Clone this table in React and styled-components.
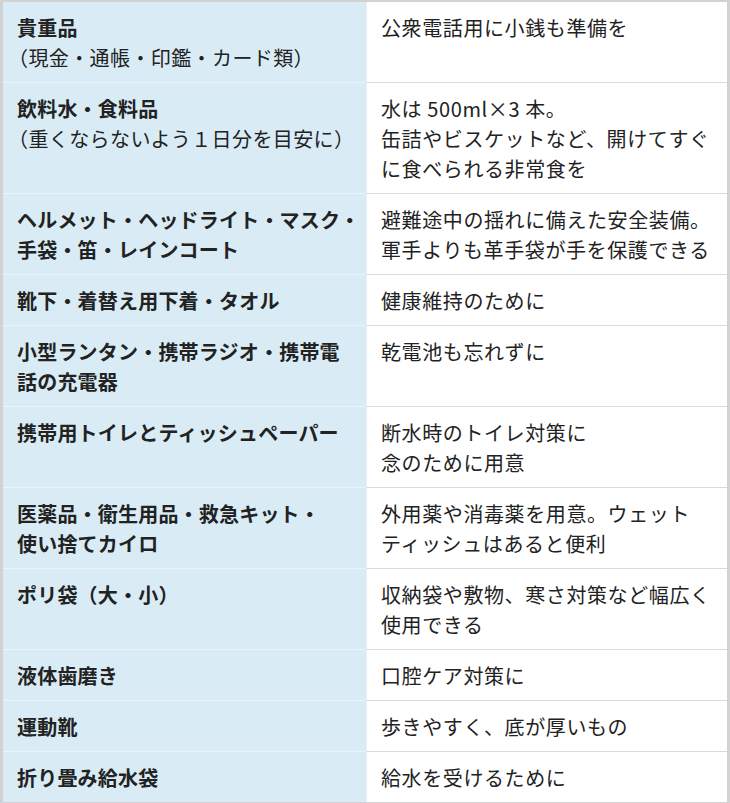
import React from "react";
import styled, { createGlobalStyle } from "styled-components";

const GlobalStyle = createGlobalStyle`
  html, body {
    margin: 0;
    padding: 0;
    background: #ffffff;
  }
  body {
    font-family: "Noto Sans CJK JP", "Noto Sans", sans-serif;
    color: #222222;
  }
`;

const Table = styled.div`
  display: grid;
  grid-template-columns: 363px 1fr;
  width: 730px;
  box-sizing: border-box;
  border-style: solid;
  border-color: #d2d2d2;
  border-width: 2px 3px 3px 3px;
`;

const Cell = styled.div`
  box-sizing: border-box;
  padding: 11px 8px 9px 14px;
  font-size: 20px;
  line-height: 30px;
  white-space: nowrap;
  font-weight: ${(p) => (p.$head ? 700 : 400)};
  background: ${(p) => (p.$head ? "#d9ecf5" : "#ffffff")};
  border-bottom: ${(p) =>
    p.$last ? "none" : `1px solid ${p.$head ? "#e9f3f8" : "#dadada"}`};
  border-left: ${(p) => (p.$head ? "none" : "1px solid #e4eef3")};
  letter-spacing: ${(p) => (p.$head ? "0.2px" : "0.6px")};
`;

const Note = styled.span`
  display: inline-block;
  margin-left: -9px;
  font-weight: 400;
  letter-spacing: 0.4px;
`;

const rows = [
  {
    head: ["貴重品", <Note key="n">（現金・通帳・印鑑・カード類）</Note>],
    body: ["公衆電話用に小銭も準備を"],
  },
  {
    head: ["飲料水・食料品", <Note key="n">（重くならないよう１日分を目安に）</Note>],
    body: ["水は 500ml×3 本。", "缶詰やビスケットなど、開けてすぐ", "に食べられる非常食を"],
  },
  {
    head: ["ヘルメット・ヘッドライト・マスク・", "手袋・笛・レインコート"],
    body: ["避難途中の揺れに備えた安全装備。", "軍手よりも革手袋が手を保護できる"],
  },
  { head: ["靴下・着替え用下着・タオル"], body: ["健康維持のために"] },
  {
    head: ["小型ランタン・携帯ラジオ・携帯電", "話の充電器"],
    body: ["乾電池も忘れずに"],
  },
  {
    head: ["携帯用トイレとティッシュペーパー"],
    body: ["断水時のトイレ対策に", "念のために用意"],
  },
  {
    head: ["医薬品・衛生用品・救急キット・", "使い捨てカイロ"],
    body: ["外用薬や消毒薬を用意。ウェット", "ティッシュはあると便利"],
  },
  {
    head: ["ポリ袋（大・小）"],
    body: ["収納袋や敷物、寒さ対策など幅広く", "使用できる"],
  },
  { head: ["液体歯磨き"], body: ["口腔ケア対策に"] },
  { head: ["運動靴"], body: ["歩きやすく、底が厚いもの"] },
  { head: ["折り畳み給水袋"], body: ["給水を受けるために"] },
];

const Lines = ({ items }) =>
  items.map((t, i) => (
    <React.Fragment key={i}>
      {i > 0 && <br />}
      {t}
    </React.Fragment>
  ));

const App = () => {
  return (
    <>
      <GlobalStyle />
      <Table>
        {rows.map((r, i) => {
          const last = i === rows.length - 1;
          return (
            <React.Fragment key={i}>
              <Cell $head $last={last}>
                <Lines items={r.head} />
              </Cell>
              <Cell $last={last}>
                <Lines items={r.body} />
              </Cell>
            </React.Fragment>
          );
        })}
      </Table>
    </>
  );
};

export default App;
